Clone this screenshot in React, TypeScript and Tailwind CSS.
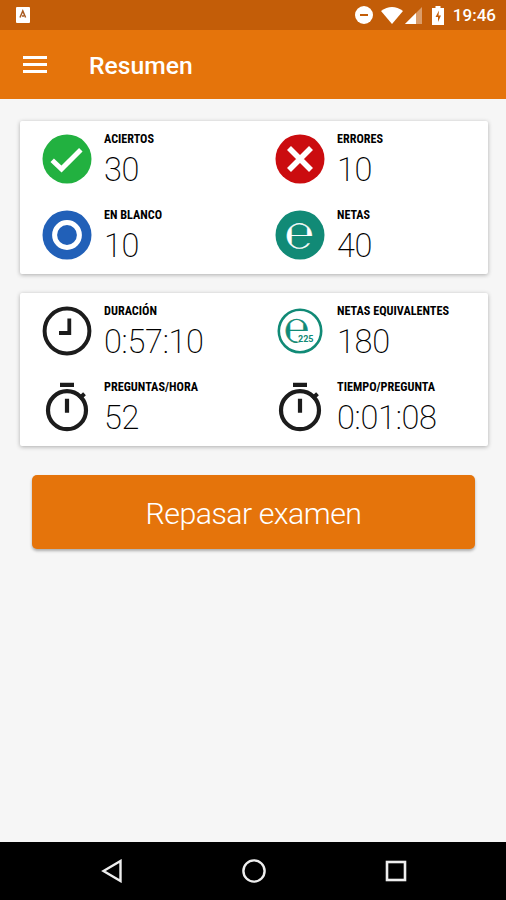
import type { ReactNode } from "react"

function CheckIcon() {
  return (
    <svg viewBox="0 0 50 50" className="size-[50px]">
      <circle cx="25" cy="25" r="24.5" fill="#22b140" />
      <path d="M10.2 26.2l9.3 8.8L38.8 15.8" fill="none" stroke="#fff" strokeWidth="5" />
    </svg>
  )
}

function CrossIcon() {
  return (
    <svg viewBox="0 0 50 50" className="size-[50px]">
      <circle cx="25" cy="25" r="24.5" fill="#cb0c0f" />
      <path d="M14 14l22 22M36 14L14 36" fill="none" stroke="#fff" strokeWidth="5.6" />
    </svg>
  )
}

function BlankIcon() {
  return (
    <svg viewBox="0 0 50 50" className="size-[50px]">
      <circle cx="25" cy="25" r="24.5" fill="#2160b8" />
      <circle cx="25" cy="25" r="12.4" fill="none" stroke="#fff" strokeWidth="5" />
    </svg>
  )
}

function NetIcon() {
  return (
    <svg viewBox="0 0 50 50" className="size-[50px]">
      <circle cx="25" cy="25" r="24.5" fill="#118a76" />
      <text
        transform="translate(24.6 38) scale(1 1.12)"
        textAnchor="middle"
        fill="#fff"
        stroke="#fff"
        strokeWidth="0.3"
        className="font-['DejaVu_Sans',sans-serif] text-[34px]"
      >
        ℮
      </text>
    </svg>
  )
}

function EquivalentIcon() {
  return (
    <svg viewBox="0 0 50 50" className="size-[50px]">
      <circle cx="25" cy="25" r="21.2" fill="#fff" stroke="#118a76" strokeWidth="2.6" />
      <text
        transform="translate(21.8 36) scale(0.9 1.08)"
        textAnchor="middle"
        fill="#118a76"
        stroke="#118a76"
        strokeWidth="0.6"
        className="font-['DejaVu_Sans',sans-serif] text-[33px]"
      >
        ℮
      </text>
      <path d="M22.5 28.5h17v8h-17z" fill="#fff" />
      <text
        x="23"
        y="36"
        textLength="15.5"
        lengthAdjust="spacingAndGlyphs"
        fill="#118a76"
        className="font-['Roboto',sans-serif] text-[9px] font-bold"
      >
        225
      </text>
    </svg>
  )
}

function ClockIcon() {
  return (
    <svg viewBox="0 0 50 50" className="size-[50px]" fill="none" stroke="#1c1c1c">
      <circle cx="25" cy="25" r="22.4" strokeWidth="4" />
      <path d="M27.3 12.5V27H17" strokeWidth="3.8" />
    </svg>
  )
}

function StopwatchIcon() {
  return (
    <svg viewBox="0 0 50 50" className="size-[50px]" fill="none" stroke="#1c1c1c">
      <circle cx="25" cy="28.2" r="19" strokeWidth="4.2" />
      <path d="M18 2.8h14M25 16.8v14" strokeWidth="4.2" />
      <path d="M37.5 16.5l5-4.8" strokeWidth="4" />
    </svg>
  )
}

type StatItem = { label: string; value: string; width: number; icon: ReactNode }

const results: StatItem[] = [
  { label: "ACIERTOS", value: "30", width: 50, icon: <CheckIcon /> },
  { label: "ERRORES", value: "10", width: 46, icon: <CrossIcon /> },
  { label: "EN BLANCO", value: "10", width: 58, icon: <BlankIcon /> },
  { label: "NETAS", value: "40", width: 33, icon: <NetIcon /> },
]

const timing: StatItem[] = [
  { label: "DURACIÓN", value: "0:57:10", width: 53, icon: <ClockIcon /> },
  { label: "NETAS EQUIVALENTES", value: "180", width: 112, icon: <EquivalentIcon /> },
  { label: "PREGUNTAS/HORA", value: "52", width: 94, icon: <StopwatchIcon /> },
  { label: "TIEMPO/PREGUNTA", value: "0:01:08", width: 98, icon: <StopwatchIcon /> },
]

function StatCard({ items }: { items: StatItem[] }) {
  return (
    <section className="grid h-[153px] grid-cols-[233px_1fr] grid-rows-[76px_76px] rounded-xs bg-white pl-[22px] shadow-[0_1px_4px_rgba(0,0,0,0.3)]">
      {items.map(({ label, value, width, icon }) => (
        <div key={label} className="flex gap-3">
          <div className="pt-[13px]">{icon}</div>
          <div className="pt-[11px] text-black">
            {/* condensed caption, narrowed to a fixed width */}
            <svg width={width} height="14" className="block overflow-visible">
              <text
                x="0"
                y="10.5"
                textLength={width}
                lengthAdjust="spacingAndGlyphs"
                className="font-['Roboto_Condensed','Roboto',sans-serif] text-[12px] font-bold"
              >
                {label}
              </text>
            </svg>
            <p className="mt-[5.5px] text-[32.5px] leading-[36px] font-extralight tracking-[-0.3px]">{value}</p>
          </div>
        </div>
      ))}
    </section>
  )
}

function StatusBar() {
  return (
    <div className="flex h-[30px] items-center bg-[#c35d08] pr-[10px] pl-4 text-white">
      <svg viewBox="0 0 14 16" className="h-4 w-3.5">
        <rect width="14" height="16" rx="1" fill="#fff" />
        <path d="M4 10.5L6.8 4l2.8 6.5M7 8v2" fill="none" stroke="#a85a20" strokeWidth="1.5" />
      </svg>
      <svg viewBox="0 0 18 18" className="ml-auto size-[18px]">
        <circle cx="9" cy="9" r="9" fill="#fff" />
        <path d="M5 9h8" stroke="#c35d08" strokeWidth="2" />
      </svg>
      <svg viewBox="0 0 22 17" className="ml-2 h-[17px] w-[22px]">
        <path d="M0 4Q11-4 22 4L11 17z" fill="#fff" />
      </svg>
      <svg viewBox="0 0 17 17" className="ml-0.5 h-[17px] w-[17px]">
        <path d="M17 0v17H0z" fill="#fff" fillOpacity="0.4" />
        <path d="M11 6v11H0z" fill="#fff" />
      </svg>
      <svg viewBox="0 0 12 19" className="ml-[10px] h-[19px] w-3">
        <path d="M3.5 0h5v2H12v17H0V2h3.5z" fill="#fff" />
        <path d="M7 4.5L3.5 11H6v5l3-6.5H6.5z" fill="#c35d08" />
      </svg>
      <span className="ml-[9px] pt-0.5 text-[17px] font-medium">19:46</span>
    </div>
  )
}

export default function App() {
  return (
    <div className="flex h-[900px] w-[506px] flex-col bg-[#f6f6f6] font-['Roboto',sans-serif]">
      <StatusBar />
      <header className="flex h-[68.5px] items-center bg-[#e5740b] pl-[23px] text-white">
        <button aria-label="Menú" className="flex flex-col gap-1">
          <span className="h-[3px] w-6 bg-white" />
          <span className="h-[3px] w-6 bg-white" />
          <span className="h-[3px] w-6 bg-white" />
        </button>
        <h1 className="ml-[42px] pt-[3px] text-[24.7px] leading-8 font-medium">Resumen</h1>
      </header>

      <main className="flex flex-1 flex-col pt-[22.5px] pr-[18px] pl-5">
        <StatCard items={results} />
        <div className="mt-[19px]">
          <StatCard items={timing} />
        </div>
        <button className="mr-[13px] ml-3 mt-[29px] h-[74px] rounded-[5px] bg-[#e5740b] pt-1 text-[30.3px] font-light tracking-[-0.5px] text-white shadow-[0_2px_3px_rgba(0,0,0,0.3)]">
          Repasar examen
        </button>
      </main>

      <nav className="flex h-[58px] items-center justify-between bg-black pr-[99px] pl-[101px]">
        <svg viewBox="0 0 22 24" className="h-6 w-[22px]">
          <path d="M2.5 12L19.5 2v20z" fill="none" stroke="#eee" strokeWidth="2.4" />
        </svg>
        <svg viewBox="0 0 24 24" className="size-6">
          <circle cx="12" cy="12" r="10.6" fill="none" stroke="#eee" strokeWidth="2.4" />
        </svg>
        <svg viewBox="0 0 22 22" className="size-[22px]">
          <rect x="2" y="2" width="18" height="18" fill="none" stroke="#eee" strokeWidth="2.6" />
        </svg>
      </nav>
    </div>
  )
}
